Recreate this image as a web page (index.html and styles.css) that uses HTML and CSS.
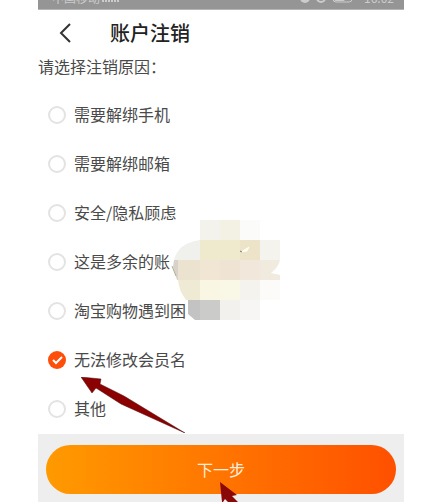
FILE: index.html
```html
<!DOCTYPE html>
<html lang="zh-CN">
<head>
    <meta charset="UTF-8" />
    <meta name="viewport" content="width=device-width, initial-scale=1" />
    <title>账户注销</title>
    <link rel="stylesheet" href="styles.css">
</head>
<body>
    <div class="phone">
        <div class="status-bar">
            <span class="carrier">中国移动
                <svg width="18" height="10" viewBox="0 0 18 10" aria-hidden="true">
                    <path d="M1 9V6M4 9V4M7 9V2M10 9V5M13 9V3M16 9V1" stroke="currentColor" stroke-width="2" />
                </svg>
            </span>
            <span class="status-icons">
                <svg width="64" height="12" viewBox="0 0 64 12" aria-hidden="true">
                    <circle cx="7" cy="6" r="5" fill="currentColor" />
                    <path d="M4 6h6" stroke="#959595" />
                    <circle cx="23" cy="6" r="4" fill="none" stroke="currentColor" stroke-width="2" />
                    <rect x="35" y="2" width="19" height="8" rx="3" fill="none" stroke="currentColor" />
                    <rect x="36" y="3" width="11" height="6" rx="2" fill="currentColor" />
                    <circle cx="60" cy="6" r="2" fill="currentColor" />
                </svg>
                <span>16:02</span>
            </span>
        </div>

        <header class="title-bar">
            <button type="button" class="back" aria-label="返回">
                <svg width="12" height="20" viewBox="0 0 12 20" aria-hidden="true">
                    <path d="M11 1L2 10l9 9" fill="none" stroke="#333" stroke-width="2" />
                </svg>
            </button>
            <h1>账户注销</h1>
        </header>

        <form class="reason-form">
            <fieldset class="reasons">
                <legend>请选择注销原因：</legend>
                <label class="reason"><input type="radio" name="reason"><span>需要解绑手机</span></label>
                <label class="reason"><input type="radio" name="reason"><span>需要解绑邮箱</span></label>
                <label class="reason"><input type="radio" name="reason"><span>安全/隐私顾虑</span></label>
                <label class="reason"><input type="radio" name="reason"><span>这是多余的账</span></label>
                <label class="reason"><input type="radio" name="reason"><span>淘宝购物遇到困</span></label>
                <label class="reason"><input type="radio" name="reason" checked><span>无法修改会员名</span></label>
                <label class="reason"><input type="radio" name="reason"><span>其他</span></label>
            </fieldset>
            <div class="footer">
                <button type="button" class="next">下一步</button>
            </div>
        </form>

        <!-- mosaic patch -->
        <svg class="mosaic" width="110" height="100" viewBox="170 220 110 100" aria-hidden="true">
            <path d="M200 220h20v20h-20z" fill="#f3f2ec" />
            <path d="M220 220h20v20h-20z" fill="#f3f1e3" />
            <path d="M240 220h20v20h-20z" fill="#fbfbfa" />
            <path d="M200 240v20h-26q4-17 26-20z" fill="#f0f0ed" />
            <path d="M200 240h40v20h-40z" fill="#efe9cd" />
            <path d="M240 240h20v20h-20z" fill="#ece3c8" />
            <path d="M260 240h20v20h-20z" fill="#f4f3ee" />
            <path d="M174 260h6v20h-3l-4-13z" fill="#d8d3ca" />
            <path d="M178 260h22v20h-22z" fill="#ebe2d0" />
            <path d="M200 260h20v20h-20z" fill="#f1e6d3" />
            <path d="M220 260h20v20h-20z" fill="#efe4d3" />
            <path d="M240 260h20v20h-20z" fill="#f2e7db" />
            <path d="M260 260h20q-2 8-9 13l9 2v5h-20z" fill="#f0ebde" />
            <path d="M178 280h22v20h-14q-7-9-8-20z" fill="#efead4" />
            <path d="M200 280h20v20h-20z" fill="#f9f7e4" />
            <path d="M220 280h20v20h-20z" fill="#f9f8e6" />
            <path d="M240 280h20v20h-20z" fill="#f4f3ee" />
            <path d="M260 280h20v20h-20z" fill="#fcfbfa" />
            <path d="M188 300h12v20h-5l-7-6z" fill="#c3c3c3" />
            <path d="M200 300h20v20h-20z" fill="#cbcbc9" />
            <path d="M220 300h20v20h-20z" fill="#f2f1ed" />
            <path d="M240 300h20v20h-20z" fill="#f7f6f4" />
            <path d="M172 266l4 10" stroke="#b5aa94" fill="none" />
            <path d="M241 252l8-5-2 4z" stroke="#fffdf0" fill="#fffdf0" />
            <path d="M240 251l2 1" stroke="#77735f" />
        </svg>

        <!-- pointer arrows -->
        <svg class="arrow arrow-option" width="104" height="56" viewBox="81 377 104 56" aria-hidden="true">
            <path d="M81 377l20 2-1 5 24 12 61 37-64-29-25-16-4 5z" fill="#8b0000" stroke="#4d1010" stroke-width=".5" />
        </svg>
        <svg class="arrow arrow-next" width="18" height="20" viewBox="220 482 18 20" aria-hidden="true">
            <path d="M220 482l17 13-5 1 6 6h-10l-3-3-2 3h-1z" fill="#8b0808" />
        </svg>
    </div>
</body>
</html>
```
FILE: styles.css
```css
* {
    box-sizing: border-box;
}

body {
    margin: 0;
    background: #fff;
    color: #4a4a4a;
    font-family: "Noto Sans CJK SC", sans-serif;
    font-size: 16px;
    line-height: 24px;
}

.phone {
    position: relative; /* anchor for the mosaic and arrows */
    margin: 0 20px 0 38px;
}

.status-bar {
    display: flex;
    justify-content: space-between;
    align-items: flex-end;
    height: 10px;
    padding: 0 10px 4px 14px;
    overflow: hidden;
    border-bottom: 1px solid #b5b5b5;
    background: #959595;
    color: #ccc;
    font-size: 12px;
    line-height: 14px;
}

.carrier,
.status-icons {
    display: flex;
    align-items: center;
    gap: 2px;
}

.title-bar {
    display: flex;
    align-items: center;
    gap: 33px;
    height: 45px;
    padding-left: 15px;
}

.back {
    display: flex;
    justify-content: center;
    width: 24px;
    padding: 0;
    border: 0;
    background: none;
}

h1 {
    margin: 0;
    color: #222;
    font-size: 20px;
    font-weight: 500;
}

.reasons {
    margin: 0;
    padding: 0 0 1px;
    border: 0;
}

legend {
    height: 35px;
    padding: 0;
    line-height: 22px;
}

.reason {
    display: flex;
    align-items: center;
    gap: 8px;
    height: 49px;
    padding-left: 10px;
}

.reason span {
    padding-bottom: 2px;
}

.reason input {
    appearance: none;
    width: 18px;
    height: 18px;
    margin: 0;
    border: 2px solid #e3e3e3;
    border-radius: 50%;
    background: #fff;
}

.reason input:checked {
    border: 0;
    background: #ff4d0a url("data:image/svg+xml,%3Csvg xmlns='http://www.w3.org/2000/svg' viewBox='0 0 18 18'%3E%3Cpath d='M5 9l3 3 6-6' fill='none' stroke='white' stroke-width='2'/%3E%3C/svg%3E");
}

.footer {
    padding: 11px 8px 8px;
    background: #eee;
}

.next {
    display: block;
    width: 100%;
    height: 49px;
    padding: 0 0 2px;
    border: 0;
    border-radius: 25px;
    background: linear-gradient(90deg, #ff9a00, #ff5000);
    color: #ffeede;
    font: inherit;
}

.mosaic,
.arrow {
    position: absolute;
    pointer-events: none;
}

.mosaic {
    top: 220px;
    left: 132px;
}

.arrow-option {
    top: 377px;
    left: 43px;
}

.arrow-next {
    top: 482px;
    left: 50%;
    margin-left: -1px;
}
```
